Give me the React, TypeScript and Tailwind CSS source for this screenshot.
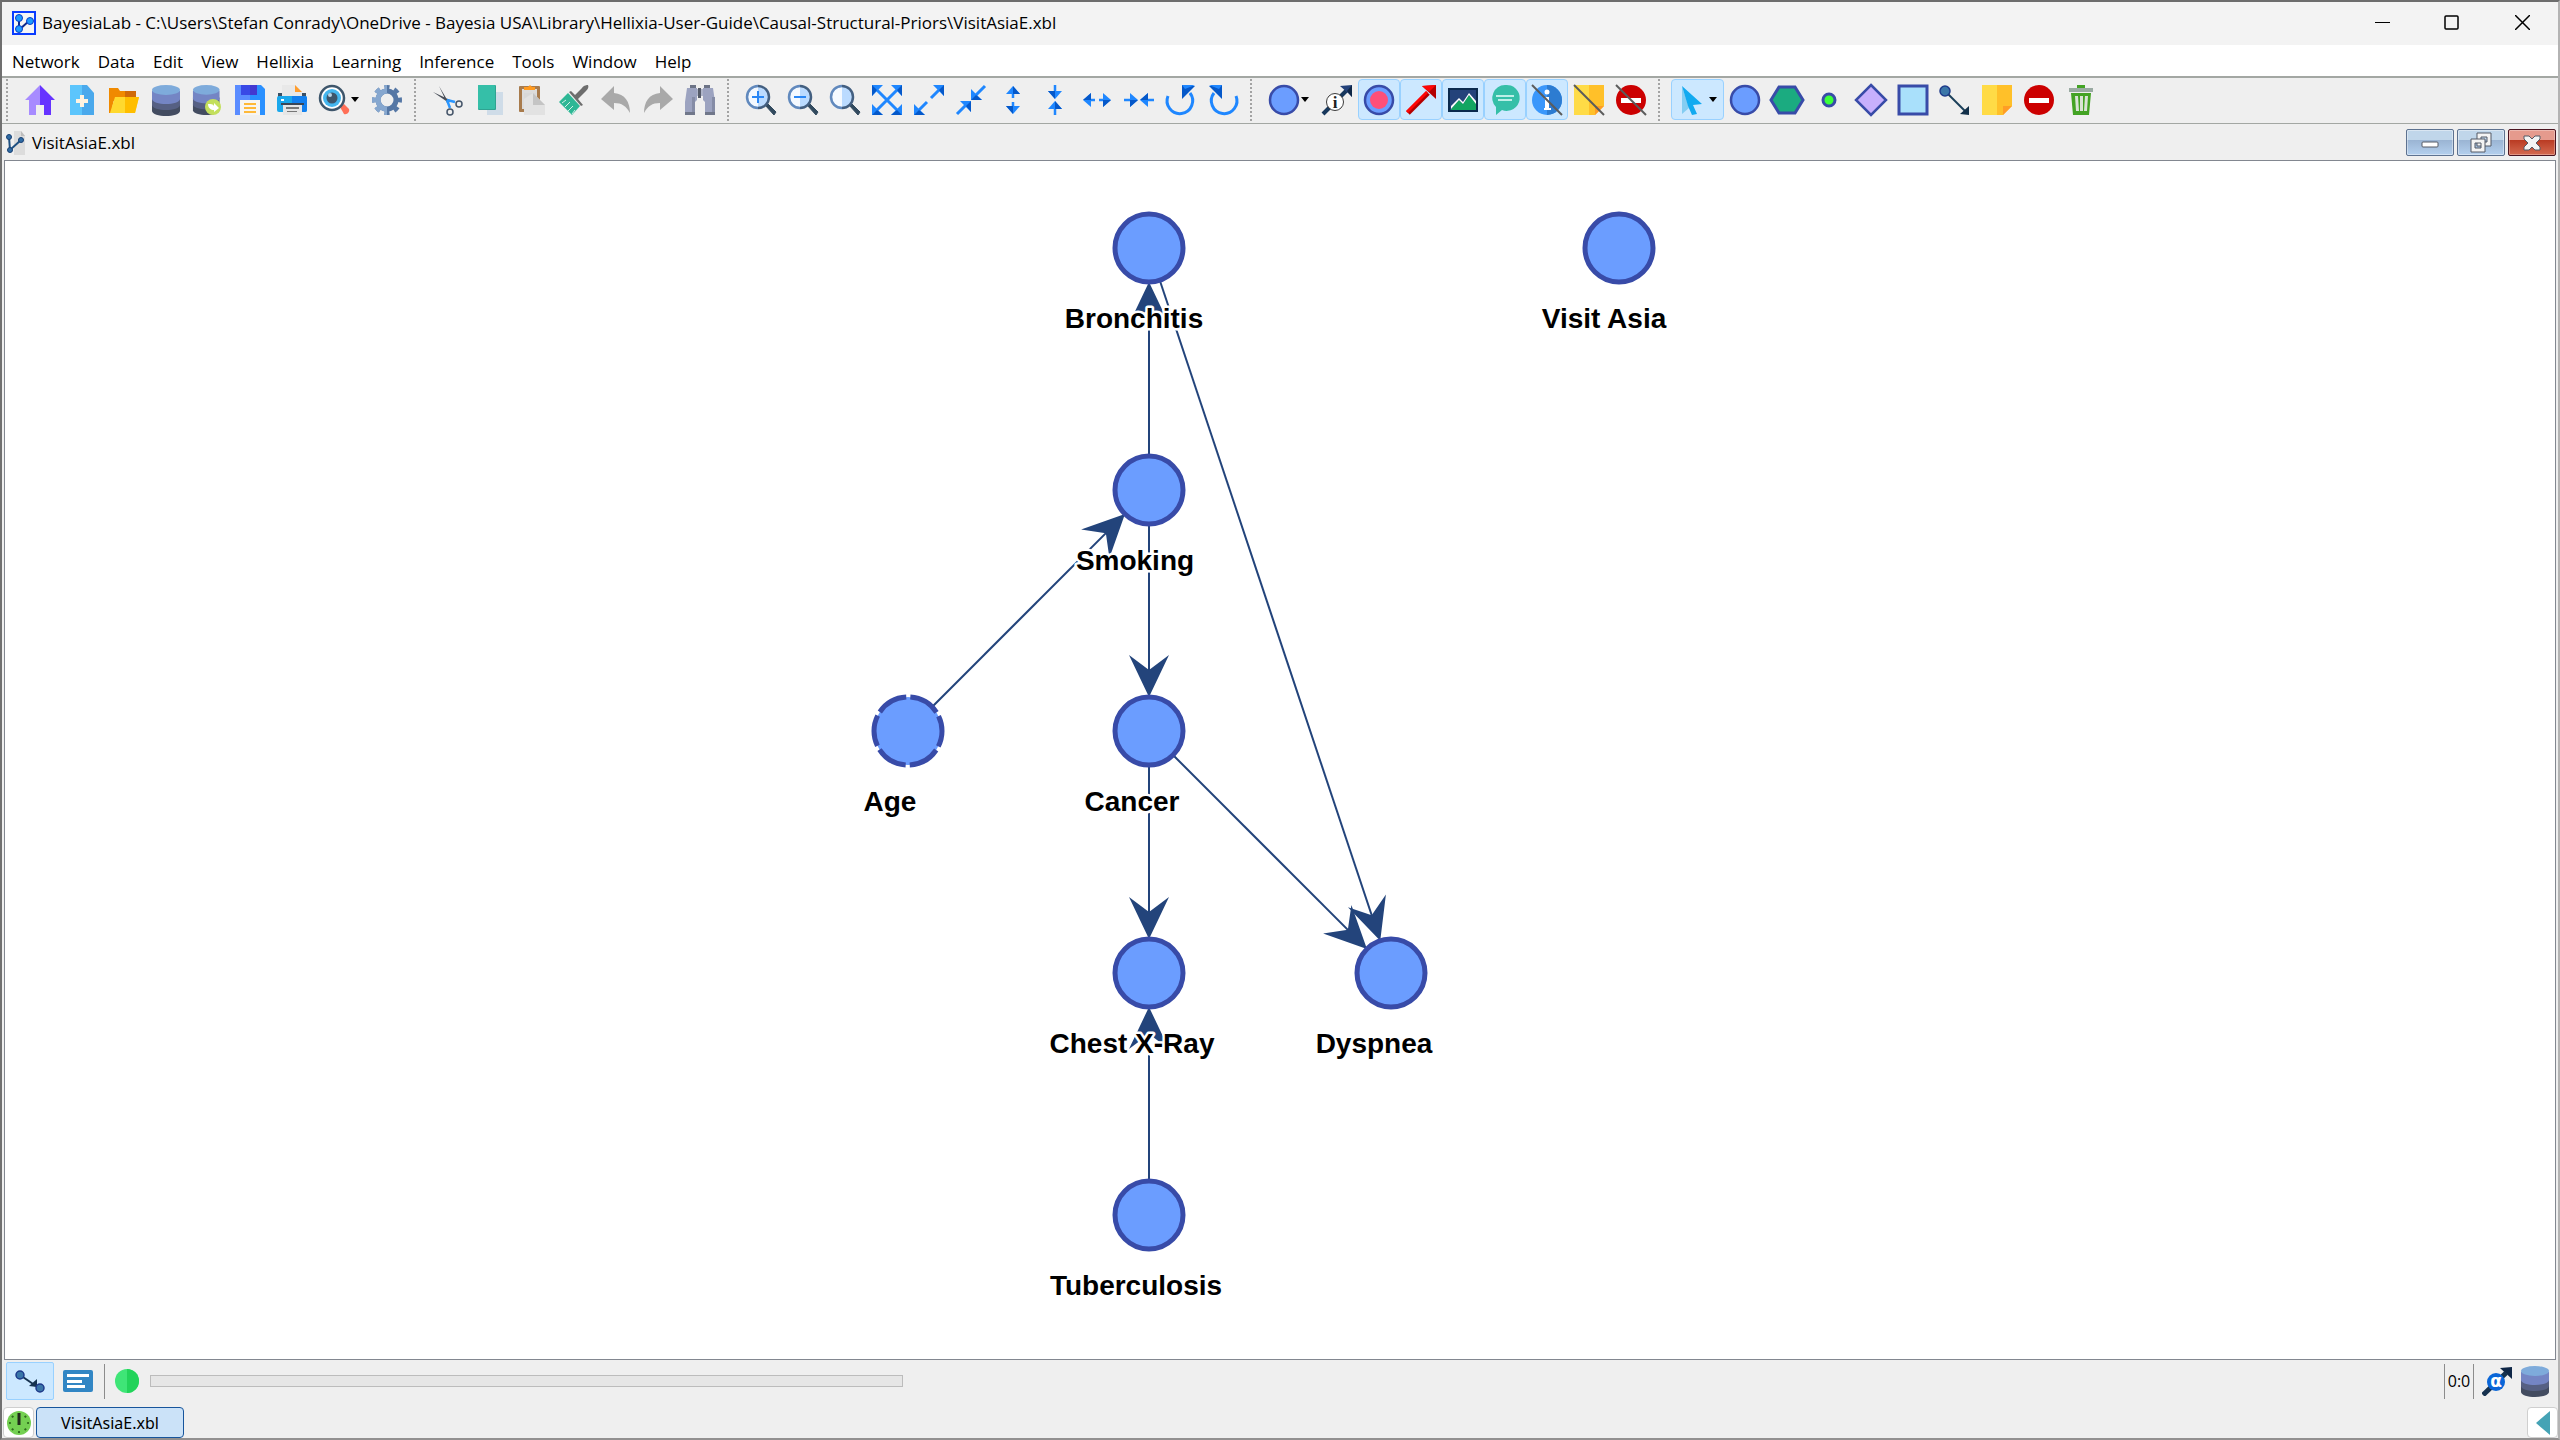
import React from 'react';

interface ToolItem {
    label: string;
    icon: React.ReactNode;
    active?: boolean;
    menu?: boolean;
}

interface GraphNode {
    name: string;
    x: number;
    y: number;
    labelX: number;
    dashed?: boolean;
}

const NODE_RADIUS = 34;
const LABEL_OFFSET = 80;

const Svg: React.FC<{ children: React.ReactNode; size?: number }> = ({ children, size = 30 }) => (
    <svg width={size} height={size} viewBox="0 0 30 30" aria-hidden="true" className="block shrink-0 overflow-visible">
        {children}
    </svg>
);

const HomeIcon = () => (
    <Svg>
        <path d="M15 0 0 15h4v15h7V20h4z" fill="#a78bff" />
        <path d="M15 0l15 15h-4v15h-7V20h-4z" fill="#6633ff" />
    </Svg>
);

const NewIcon = () => (
    <Svg>
        <path d="M3 0h12v30H3z" fill="#5cc5fc" />
        <path d="M15 0h5l7 8v22H15z" fill="#4aa9ec" />
        <path d="M13 10h4v4h4v4h-4v4h-4v-4H9v-4h4z" fill="#fff3e0" />
    </Svg>
);

const FolderIcon = () => (
    <Svg>
        <path d="M0 3h9l2 3h16v10H0z" fill="#f08a00" />
        <path d="M16 6h11v8H16z" fill="#d06a0a" />
        <path d="M0 10h6L2 28H0z" fill="#f08a00" />
        <path d="M6 12h24l-4 16H1z" fill="#ffd92e" />
        <path d="M16 12h14l-4 16H16z" fill="#ffbe00" />
    </Svg>
);

const DatabaseShape = () => (
    <>
        <path d="M1 19v7c0 3 7 5 14 5s14-2 14-5v-7z" fill="#434c60" />
        <path d="M1 13v7c0 3 7 5 14 5s14-2 14-5v-7z" fill="#566083" />
        <path d="M1 6v8c0 3 7 5 14 5s14-2 14-5V6z" fill="#7485c4" />
        <ellipse cx="15" cy="5" rx="14" ry="5" fill="#7eabdb" />
    </>
);

const DatabaseIcon = () => (
    <Svg>
        <DatabaseShape />
    </Svg>
);

const DatabaseSyncIcon = () => (
    <Svg>
        <g transform="translate(-1 0) scale(.95 .97)">
            <DatabaseShape />
        </g>
        <circle cx="20" cy="22" r="8" fill="#c3df5c" />
        <path d="M15 19c3 0 5 0 6 2v-3l5 5-5 4v-2c-3 0-6-2-6-6z" fill="#fff" />
    </Svg>
);

const SaveIcon = () => (
    <Svg>
        <path d="M0 0h15v30H0z" fill="#5a8cff" />
        <path d="M15 0h11l4 4v26H15z" fill="#2a90ff" />
        <path d="M6 0h16v10H6z" fill="#3949e6" />
        <path d="M15 0h7v10h-7z" fill="#4338d0" />
        <path d="M5 15h20v15H5z" fill="#f7f5f2" />
        <path d="M9 18h12v2H9zM9 22h12v2H9zM9 26h12v2H9z" fill="#ffb938" />
    </Svg>
);

const PrintIcon = () => (
    <Svg>
        <path d="M1 8h28v4H1z" fill="#3c5064" />
        <path d="M5 0h13l7 7v5H5z" fill="#e8e8e8" />
        <path d="M18 0l7 7h-7z" fill="#ff9d2e" />
        <rect y="11" width="30" height="16" rx="2" fill="#1aa8ec" />
        <path d="M15 11h13q2 0 2 2v12q0 2-2 2H15z" fill="#1480ee" />
        <path d="M4 18h23v2H4z" fill="#3a4656" />
        <path d="M6 20h19v10H6z" fill="#e6e6e6" />
        <path d="M9 22h13v2H9zM10 26h10v1H10z" fill="#777" />
        <path d="M4 14h3v2H4z" fill="#fff" />
    </Svg>
);

const FindNodeIcon = () => (
    <Svg>
        <path d="M21 22l4-3 5 5c1 3-2 6-5 5z" fill="#ff6f57" />
        <circle cx="13" cy="13" r="12" fill="#fff" stroke="#3e566b" strokeWidth="2.5" />
        <circle cx="13" cy="13" r="9" fill="#45b6ee" />
        <circle cx="13" cy="13" r="5.5" fill="#3e566b" />
        <circle cx="11" cy="10" r="2" fill="#b9d5e8" />
    </Svg>
);

const GearIcon = () => (
    <Svg>
        <g fill="none" stroke="#5577a5">
            <circle cx="15" cy="15" r="9" strokeWidth="5" />
            <circle cx="15" cy="15" r="13" strokeWidth="4" pathLength="16" strokeDasharray="1 1" strokeDashoffset=".5" />
        </g>
        <g fill="none" stroke="#86a7cf">
            <path d="M15 6a9 9 0 0 0 0 18" strokeWidth="5" />
            <path d="M15 2a13 13 0 0 0 0 26" strokeWidth="4" pathLength="8" strokeDasharray="1 1" strokeDashoffset=".5" />
        </g>
    </Svg>
);

const CutIcon = () => (
    <Svg>
        <path d="M6 1l10 17-2 0zM0 7l17 8-1 3z" fill="#474d57" />
        <path d="M14 15l8 2M14 15l3 8" stroke="#2a96ff" strokeWidth="2.5" />
        <circle cx="26" cy="19" r="3" fill="none" stroke="#46566a" strokeWidth="1.5" />
        <circle cx="17" cy="27" r="3" fill="none" stroke="#46566a" strokeWidth="1.5" />
    </Svg>
);

const CopyIcon = () => (
    <Svg>
        <path d="M12 7h16v23H12z" fill="#cfdce8" />
        <rect x="3" width="18" height="25" rx="1" fill="#2fa391" />
        <rect x="3" width="17" height="24" rx="1" fill="#35bfa8" />
    </Svg>
);

const PasteIcon = () => (
    <Svg>
        <rect x="2" y="1" width="21" height="26" rx="1" fill="#a87b4d" />
        <path d="M5 4h15v20H5z" fill="#dcdcdc" />
        <path d="M7 5V2h4l2-2 2 2h3v3z" fill="#ff9a1f" />
        <path d="M7 8h12v22H7z" fill="#d8d8d8" />
        <path d="M16 8l12 12v10H7V14z" fill="#e2e2e2" />
        <path d="M16 8v12h12z" fill="#c4c4c4" />
    </Svg>
);

const BrushIcon = () => (
    <Svg>
        <path d="M16 10l7-7c2-3 5-3 6-3 1 2 0 4-2 6l-8 8 5 6-2 1L10 7l2-1z" fill="#6d6d6d" />
        <path d="M9 8l12 13-8 9L0 17z" fill="#2db795" />
        <path d="M3 18l4-3M6 22l5-5M9 26l5-5M13 29l3-4" stroke="#d2f1e8" strokeWidth="1" />
    </Svg>
);

const UndoIcon = () => (
    <Svg>
        <path d="M13 1v7c11 1 16 9 16 20-4-7-8-10-16-10v7L0 14z" fill="#a9a9a9" />
    </Svg>
);

const RedoIcon = () => (
    <Svg>
        <path d="M17 1v7C6 9 1 17 1 28c4-7 8-10 16-10v7l13-11z" fill="#a9a9a9" />
    </Svg>
);

const BinocularsIcon = () => (
    <Svg>
        <path d="M5 0h6v3H5zM19 0h6v3h-6z" fill="#6c7386" />
        <path d="M2 3h10v12l-2 2v13H0V17zM18 3h10l2 14v13H20V17l-2-2z" fill="#9ca3c0" />
        <path d="M7 12h3v18H7zM27 12h3v18h-3z" fill="#858ca6" />
        <path d="M12 4h6v7h-6z" fill="#aeb4c9" />
        <path d="M13 3h3v10h-3z" fill="#555b69" />
        <path d="M0 27h10v3H0zM20 27h10v3H20z" fill="#70778a" />
    </Svg>
);

const Magnifier: React.FC<{ sign?: string }> = ({ sign }) => (
    <Svg>
        <path d="M19 20l2-2 9 9-2 3z" fill="#324a5e" stroke="#324a5e" />
        <circle cx="12" cy="12" r="10.5" fill="#bbdbff" />
        <path d="M12 2a10 10 0 0 0 0 20z" fill="#f4f9ff" />
        <path d="M12 1a11 11 0 0 0 0 22" fill="none" stroke="#6189bd" strokeWidth="2.5" />
        <path d="M12 1a11 11 0 0 1 0 22" fill="none" stroke="#435f80" strokeWidth="2.5" />
        {sign && <path d={sign} stroke="#2a87f5" strokeWidth="2" />}
    </Svg>
);

const FitIcon = () => (
    <Svg>
        <path d="M5 5l20 20M25 5L5 25" stroke="#1f87ff" strokeWidth="3" />
        <path d="M0 0h11L0 11zM30 0v11L19 0zM0 30V19l11 11zM30 30H19l11-11z" fill="#1f87ff" />
        <path d="M0 0l5 5-5 6zM30 0v11l-5-6zM0 30l5-5 6 5zM30 30l-5-5-6 5z" fill="#0558c9" />
    </Svg>
);

const ExpandIcon = () => (
    <Svg>
        <path d="M25 5l-8 8M13 17l-8 8" stroke="#1f87ff" strokeWidth="3" />
        <path d="M30 0v11L19 0zM0 30V19l11 11z" fill="#1f87ff" />
        <path d="M30 0v11l-5-6zM0 30l5-5 6 5z" fill="#0558c9" />
    </Svg>
);

const ShrinkIcon = () => (
    <Svg>
        <path d="M29 1l-9 9M1 29l9-9" stroke="#1f87ff" strokeWidth="3" />
        <path d="M15 4v11h11zM15 27V16H4z" fill="#1f87ff" />
        <path d="M15 15l5-5 6 5zM15 16l-5 5 5 6z" fill="#0558c9" />
    </Svg>
);

// Head pointing up with its tip at the origin
const ArrowTip: React.FC<{ at: string }> = ({ at }) => (
    <g transform={at}>
        <path d="M0 0l7 8H-7z" fill="#1f87ff" />
        <path d="M0 0l7 8H0z" fill="#0558c9" />
    </g>
);

const StretchIcon: React.FC<{ angle: number }> = ({ angle }) => (
    <Svg>
        <g transform={`rotate(${angle} 15 15)`}>
            <path d="M15 6v7M15 17v7" stroke="#1f87ff" strokeWidth="2.5" />
            <ArrowTip at="translate(15 1)" />
            <ArrowTip at="translate(15 29) rotate(180)" />
        </g>
    </Svg>
);

const SqueezeIcon: React.FC<{ angle: number }> = ({ angle }) => (
    <Svg>
        <g transform={`rotate(${angle} 15 15)`}>
            <path d="M15 0v7M15 23v7" stroke="#1f87ff" strokeWidth="2.5" />
            <ArrowTip at="translate(15 14) rotate(180)" />
            <ArrowTip at="translate(15 16)" />
        </g>
    </Svg>
);

const RotateLeftIcon = () => (
    <Svg>
        <path d="M2 11a12.8 12.8 0 1 0 22-3" fill="none" stroke="#1f87ff" strokeWidth="3" />
        <path d="M16 0v14L29 1z" fill="#0558c9" />
        <path d="M16 0h13l-10 4z" fill="#1f87ff" />
    </Svg>
);

const RotateRightIcon = () => (
    <Svg>
        <path d="M28 11A12.8 12.8 0 1 1 6 8" fill="none" stroke="#1f87ff" strokeWidth="3" />
        <path d="M14 0v14L1 1z" fill="#0558c9" />
        <path d="M14 0H1l10 4z" fill="#1f87ff" />
    </Svg>
);

const NodeIcon = () => (
    <Svg>
        <circle cx="15" cy="15" r="14" fill="#6b9dff" stroke="#384ba8" strokeWidth="2.5" />
    </Svg>
);

const ArcInfoIcon = () => (
    <Svg>
        <path d="M1 29L25 5" stroke="#17375c" strokeWidth="4" />
        <path d="M30 0v12l-4-4-8-7z" fill="#24427a" />
        <path d="M30 0v12l-5-6z" fill="#0f2747" />
        <circle cx="13" cy="17" r="8.5" fill="#fff" stroke="#3c3c3c" />
        <text x="13" y="23" textAnchor="middle" className="fill-[#222] font-['Liberation_Serif',serif] text-[17px] font-bold">i</text>
    </Svg>
);

const TargetIcon = () => (
    <Svg>
        <circle cx="15" cy="15" r="14" fill="#6b9dff" stroke="#384ba8" strokeWidth="2.5" />
        <circle cx="15" cy="15" r="9" fill="#ff4f78" />
    </Svg>
);

const RedArrowIcon = () => (
    <Svg>
        <path d="M2 28L22 8" stroke="#b30000" strokeWidth="5" />
        <path d="M1 27L21 7" stroke="#ff0505" strokeWidth="3" />
        <path d="M30 0v14L16 1z" fill="#b30000" />
        <path d="M30 0L16 1l7 6z" fill="#ff0505" />
    </Svg>
);

const ImageIcon = () => (
    <Svg>
        <rect x="1" y="4" width="28" height="22" fill="#24427a" stroke="#0b2a4d" strokeWidth="2" />
        <path d="M3 24l8-9 4 4 6-9 7 8v7H3z" fill="#12a561" />
        <path d="M3 24l8-9 4 4 6-9 7 9v-3l-7-8-6 9-4-4-8 8z" fill="#fff" />
    </Svg>
);

const CommentIcon = () => (
    <Svg>
        <path d="M15 0a13 13 0 1 1-3 25l-6 5V22A13 13 0 0 1 15 0z" fill="#35bfa8" />
        <path d="M6 11h18M8 15h14" stroke="#eafffb" strokeWidth="1.5" />
    </Svg>
);

const Strike = () => <path d="M0 0l30 30" stroke="#5b5b5b" strokeWidth="2" />;

const InfoOffIcon = () => (
    <Svg>
        <circle cx="15" cy="15" r="15" fill="#3a97fb" />
        <path d="M15 0a15 15 0 0 1 0 30z" fill="#2d7cd1" />
        <circle cx="15" cy="7" r="2.5" fill="#fff" />
        <path d="M12 12h5v11h2v2h-7v-2h1v-9h-1z" fill="#fff" />
        <Strike />
    </Svg>
);

const NoteShape = () => (
    <>
        <path d="M0 0h15v30H0z" fill="#ffdb46" />
        <path d="M15 0h15v21l-9 9h-6z" fill="#ffc029" />
        <path d="M21 30v-9h9z" fill="#ff9d26" />
    </>
);

const ForbiddenShape = () => (
    <>
        <circle cx="15" cy="15" r="15" fill="#cc0000" />
        <path d="M5 13h20v5H5z" fill="#fff" />
    </>
);

const PointerIcon = () => (
    <Svg>
        <path d="M5 1v28l7-6z" fill="#84cdf2" />
        <path d="M5 1l20 18-9 1 4 9-5 1-4-9z" fill="#12aaf0" />
    </Svg>
);

const HexagonIcon = () => (
    <Svg>
        <path d="M7 2h16l8 13-8 13H7L-1 15z" fill="#1bab80" stroke="#384ba8" strokeWidth="3" />
    </Svg>
);

const SmallNodeIcon = () => (
    <Svg>
        <circle cx="15" cy="15" r="6" fill="#3cff3c" stroke="#384ba8" strokeWidth="3" />
    </Svg>
);

const DiamondIcon = () => (
    <Svg>
        <path d="M15 0l15 15-15 15L0 15z" fill="#c7b0fd" stroke="#384ba8" strokeWidth="2.5" />
    </Svg>
);

const SquareIcon = () => (
    <Svg>
        <path d="M1 1h28v28H1z" fill="#a9e0fb" stroke="#384ba8" strokeWidth="3" />
    </Svg>
);

const ArcIcon = () => (
    <Svg>
        <path d="M5 6l21 21" stroke="#1b3f5a" strokeWidth="2" />
        <path d="M29 30V21l-9 8z" fill="#12304a" />
        <circle cx="5" cy="6" r="5" fill="#3a76a8" stroke="#1e3a8a" strokeWidth="1.5" />
    </Svg>
);

const TrashIcon = () => (
    <Svg>
        <path d="M11 0h8v3h-8z" fill="#43a324" />
        <path d="M3 3h24v4H3z" fill="#9aaaa2" />
        <path d="M5 8h20l-2 22H7z" fill="#43a324" />
        <path d="M9 11h3l1 15h-3zM14 11h3v15h-3zM19 11h3l-1 15h-3z" fill="#d9e3d6" />
    </Svg>
);

const toolGroups: ToolItem[][] = [
    [
        { label: 'Home', icon: <HomeIcon /> },
        { label: 'New', icon: <NewIcon /> },
        { label: 'Open', icon: <FolderIcon /> },
        { label: 'Open data', icon: <DatabaseIcon /> },
        { label: 'Associate data', icon: <DatabaseSyncIcon /> },
        { label: 'Save', icon: <SaveIcon /> },
        { label: 'Print', icon: <PrintIcon /> },
        { label: 'Search', icon: <FindNodeIcon />, menu: true },
        { label: 'Settings', icon: <GearIcon /> },
    ],
    [
        { label: 'Cut', icon: <CutIcon /> },
        { label: 'Copy', icon: <CopyIcon /> },
        { label: 'Paste', icon: <PasteIcon /> },
        { label: 'Paste format', icon: <BrushIcon /> },
        { label: 'Undo', icon: <UndoIcon /> },
        { label: 'Redo', icon: <RedoIcon /> },
        { label: 'Find', icon: <BinocularsIcon /> },
    ],
    [
        { label: 'Zoom in', icon: <Magnifier sign="M12 6v12M6 12h12" /> },
        { label: 'Zoom out', icon: <Magnifier sign="M6 12h12" /> },
        { label: 'Default zoom', icon: <Magnifier /> },
        { label: 'Best fit', icon: <FitIcon /> },
        { label: 'Expand', icon: <ExpandIcon /> },
        { label: 'Shrink', icon: <ShrinkIcon /> },
        { label: 'Stretch vertically', icon: <StretchIcon angle={0} /> },
        { label: 'Squeeze vertically', icon: <SqueezeIcon angle={0} /> },
        { label: 'Stretch horizontally', icon: <StretchIcon angle={90} /> },
        { label: 'Squeeze horizontally', icon: <SqueezeIcon angle={90} /> },
        { label: 'Rotate left', icon: <RotateLeftIcon /> },
        { label: 'Rotate right', icon: <RotateRightIcon /> },
    ],
    [
        { label: 'Node style', icon: <NodeIcon />, menu: true },
        { label: 'Arc information', icon: <ArcInfoIcon /> },
        { label: 'Target node', icon: <TargetIcon />, active: true },
        { label: 'Arc colors', icon: <RedArrowIcon />, active: true },
        { label: 'Images', icon: <ImageIcon />, active: true },
        { label: 'Comments', icon: <CommentIcon />, active: true },
        { label: 'Hide information', icon: <InfoOffIcon />, active: true },
        { label: 'Hide notes', icon: <Svg><NoteShape /><Strike /></Svg> },
        { label: 'Hide forbidden arcs', icon: <Svg><ForbiddenShape /><Strike /></Svg> },
    ],
    [
        { label: 'Select', icon: <PointerIcon />, active: true, menu: true },
        { label: 'Create node', icon: <NodeIcon /> },
        { label: 'Create decision', icon: <HexagonIcon /> },
        { label: 'Create constraint', icon: <SmallNodeIcon /> },
        { label: 'Create utility', icon: <DiamondIcon /> },
        { label: 'Create function', icon: <SquareIcon /> },
        { label: 'Create arc', icon: <ArcIcon /> },
        { label: 'Create note', icon: <Svg><NoteShape /></Svg> },
        { label: 'Forbid arc', icon: <Svg><ForbiddenShape /></Svg> },
        { label: 'Delete', icon: <TrashIcon /> },
    ],
];

const menus = ['Network', 'Data', 'Edit', 'View', 'Hellixia', 'Learning', 'Inference', 'Tools', 'Window', 'Help'];

// Coordinates are relative to the top left corner of the canvas
const nodes: GraphNode[] = [
    { name: 'Bronchitis', x: 1144, y: 87, labelX: 1129 },
    { name: 'Visit Asia', x: 1614, y: 87, labelX: 1599 },
    { name: 'Smoking', x: 1144, y: 329, labelX: 1130 },
    { name: 'Age', x: 903, y: 570, labelX: 885, dashed: true },
    { name: 'Cancer', x: 1144, y: 570, labelX: 1127 },
    { name: 'Chest X-Ray', x: 1144, y: 812, labelX: 1127 },
    { name: 'Dyspnea', x: 1386, y: 812, labelX: 1369 },
    { name: 'Tuberculosis', x: 1144, y: 1054, labelX: 1131 },
];

const arcs = [
    ['Smoking', 'Bronchitis'],
    ['Bronchitis', 'Dyspnea'],
    ['Age', 'Smoking'],
    ['Smoking', 'Cancer'],
    ['Cancer', 'Chest X-Ray'],
    ['Cancer', 'Dyspnea'],
    ['Tuberculosis', 'Chest X-Ray'],
];

const findNode = (name: string) => nodes.find(n => n.name === name)!;

const Arc: React.FC<{ from: GraphNode; to: GraphNode }> = ({ from, to }) => {
    const length = Math.hypot(to.x - from.x, to.y - from.y);
    const angle = Math.atan2(to.y - from.y, to.x - from.x) * 180 / Math.PI;
    const tip = length - NODE_RADIUS;

    return (
        <g transform={`translate(${from.x} ${from.y}) rotate(${angle})`} className="fill-[#23447b] stroke-[#23447b]">
            <line x1={NODE_RADIUS} y1="0" x2={tip - 10} y2="0" strokeWidth="2" />
            <path d="M0 0l-42-20 15 20-15 20z" transform={`translate(${tip} 0)`} stroke="none" />
        </g>
    );
};

const NetworkCanvas = () => (
    <svg className="block size-full" role="img" aria-label="Bayesian network">
        {arcs.map(([from, to]) => (
            <Arc key={from + to} from={findNode(from)} to={findNode(to)} />
        ))}
        {nodes.map(node => (
            <circle
                key={node.name}
                cx={node.x}
                cy={node.y}
                r={NODE_RADIUS}
                strokeWidth="5"
                pathLength={360}
                strokeDasharray={node.dashed ? '53 7' : undefined}
                strokeDashoffset={node.dashed ? 26 : undefined}
                className="fill-[#6b9dff] stroke-[#384ba8]"
            />
        ))}
        {nodes.map(node => (
            <text
                key={node.name}
                x={node.labelX}
                y={node.y + LABEL_OFFSET}
                textAnchor="middle"
                className="fill-black stroke-white stroke-[5px] font-['Liberation_Sans',Arial,sans-serif] text-[28px] font-bold [paint-order:stroke] [stroke-linejoin:round]"
            >
                {node.name}
            </text>
        ))}
    </svg>
);

const ToolHandle = () => (
    <div className="w-[19px] self-stretch pt-px pl-1.5">
        <div className="h-full w-0.5 bg-[repeating-linear-gradient(to_bottom,#a3a3a3_0_2px,transparent_2px_4px)]" />
    </div>
);

const ToolButton: React.FC<{ item: ToolItem }> = ({ item }) => (
    <button
        aria-label={item.label}
        className={`flex h-[41px] items-center rounded-sm border pl-[5px] ${item.menu ? 'w-[53px] gap-0.5' : 'w-[42px]'} ${item.active ? 'border-[#99d1ff] bg-[#cce8ff]' : 'border-transparent'}`}
    >
        {item.icon}
        {item.menu && (
            <svg width="8" height="5" viewBox="0 0 8 5" aria-hidden="true" className="shrink-0">
                <path d="M0 0h8L4 5z" />
            </svg>
        )}
    </button>
);

const TitleBar = () => (
    <header className="flex h-[43px] shrink-0 items-center bg-[#f3f3f3] pb-0.5 pl-2.5">
        <svg width="24" height="24" viewBox="0 0 24 24" aria-hidden="true">
            <path d="M1 1h22v22H1z" fill="#f6f6f6" stroke="#0a3cff" strokeWidth="2" />
            <path d="M7 7v12L18 9" fill="none" stroke="#0d2a8c" strokeWidth="2" />
            <g fill="#1d9bff" stroke="#0a3cc8">
                <circle cx="7" cy="7" r="3.5" />
                <circle cx="7" cy="18" r="3.5" />
                <circle cx="18" cy="10" r="3.5" />
            </g>
        </svg>
        <h1 className="ml-1.5 flex-1 truncate">
            BayesiaLab - C:\Users\Stefan Conrady\OneDrive - Bayesia USA\Library\Hellixia-User-Guide\Causal-Structural-Priors\VisitAsiaE.xbl
        </h1>
        <button aria-label="Minimize" className="flex h-full w-[69px] items-center justify-center">
            <svg width="15" height="15"><path d="M0 7.5h15" stroke="#000" /></svg>
        </button>
        <button aria-label="Maximize" className="flex h-full w-[69px] items-center justify-center">
            <svg width="15" height="15"><rect x="1" y="1" width="13" height="13" rx="1" fill="none" stroke="#000" strokeWidth="1.5" /></svg>
        </button>
        <button aria-label="Close" className="flex h-full w-[72px] items-center justify-center">
            <svg width="15" height="15"><path d="M0 0l15 15M15 0L0 15" stroke="#000" strokeWidth="1.5" /></svg>
        </button>
    </header>
);

const DocumentTitle = () => (
    <div className="flex h-9 shrink-0 items-center pt-px pr-0.5 pl-1">
        <svg width="20" height="24" viewBox="0 0 20 24" aria-hidden="true">
            <path d="M8 0h7l4 5v19H8z" fill="#dcdcdc" />
            <path d="M15 0l4 5h-4z" fill="#bdbdbd" />
            <path d="M3 6l1 13L15 9" fill="none" stroke="#1e4f80" strokeWidth="2" />
            <g fill="#2f6ca5" stroke="#173f73">
                <circle cx="3" cy="6" r="2.5" />
                <circle cx="4" cy="19" r="2.5" />
                <circle cx="15" cy="9" r="2.5" />
            </g>
        </svg>
        <h2 className="ml-1.5 flex-1">VisitAsiaE.xbl</h2>
        <div className="flex gap-[3px]">
            <button aria-label="Minimize document" className="flex h-[27px] w-12 items-center justify-center rounded-xs border border-[#5d7290] bg-linear-to-b from-[#c0d6ea] from-40% via-[#9ab4d3] via-40% to-[#b4d0ee] inset-ring inset-ring-white/40">
                <svg width="18" height="18"><rect x="1" y="8" width="16" height="5" rx="1" fill="#fff" stroke="#555b66" /></svg>
            </button>
            <button aria-label="Restore document" className="flex h-[27px] w-12 items-center justify-center rounded-xs border border-[#5d7290] bg-linear-to-b from-[#c0d6ea] from-40% via-[#9ab4d3] via-40% to-[#b4d0ee] inset-ring inset-ring-white/40">
                <svg width="22" height="22" viewBox="0 0 22 22" fill="#f4f4f4" stroke="#555b66" fillRule="evenodd">
                    <path d="M7 1h14v13H7zM11 5h6v5h-6z" />
                    <path d="M1 7h14v13H1zM5 11h6v5H5z" />
                </svg>
            </button>
            <button aria-label="Close document" className="flex h-[27px] w-12 items-center justify-center rounded-xs border border-[#4b1420] bg-linear-to-b from-[#e59a8d] from-40% via-[#b93a22] via-40% to-[#d46a50] inset-ring inset-ring-white/30">
                <svg width="18" height="16" viewBox="0 0 18 16">
                    <path d="M1 1h5l3 3 3-3h5v3l-4 4 4 4v3h-5l-3-3-3 3H1v-3l4-4-4-4z" fill="#f4f4f4" stroke="#555b66" strokeLinejoin="round" />
                </svg>
            </button>
        </div>
    </div>
);

const StatusBar = () => (
    <div className="flex h-[42px] shrink-0 items-center pl-1">
        <button aria-label="Graph view" className="flex h-[38px] w-12 items-center justify-center rounded-xs border border-[#99d1ff] bg-[#cce8ff]">
            <svg width="30" height="24" viewBox="0 0 30 24">
                <path d="M5 6l16 11" stroke="#16324f" strokeWidth="2" />
                <path d="M22 10v8l-8-1z" fill="#16324f" />
                <circle cx="5" cy="6" r="4" fill="#3a76a8" stroke="#1e3a8a" strokeWidth="1.5" />
                <circle cx="25" cy="19" r="4" fill="#3a76a8" stroke="#1e3a8a" strokeWidth="1.5" />
            </svg>
        </button>
        <button aria-label="Report view" className="ml-[9px]">
            <svg width="30" height="22" viewBox="0 0 30 22" className="block">
                <rect width="30" height="22" rx="2" fill="#3286c4" />
                <path d="M4 4h22v3H4zM4 10h15v3H4zM4 15h18v3H4z" fill="#fff" />
            </svg>
        </button>
        <div className="ml-[11px] h-[35px] w-px bg-[#8c8c8c]" />
        <svg width="24" height="24" viewBox="0 0 24 24" aria-hidden="true" className="ml-2.5">
            <circle cx="12" cy="12" r="12" fill="#3fe577" />
            <path d="M12 0a12 12 0 0 1 0 24z" fill="#22d35a" />
        </svg>
        <div role="progressbar" aria-label="Progress" aria-valuenow={0} className="ml-[11px] h-3 w-[753px] border border-[#bcbcbc] bg-[#e6e6e6]" />
        <div className="ml-auto flex h-[35px] w-[30px] items-center justify-center border-x border-[#8c8c8c] text-base">0:0</div>
        <button aria-label="Arc analysis" className="ml-2">
            <svg width="30" height="30" viewBox="0 0 30 30" className="block">
                <path d="M1 29L24 7" stroke="#16324f" strokeWidth="5" />
                <path d="M30 1v12L18 2z" fill="#0f2747" />
                <circle cx="14" cy="16" r="9" fill="#0a66d8" />
                <text x="14" y="21" textAnchor="middle" className="fill-white font-['DejaVu_Sans',sans-serif] text-[17px] font-bold">α</text>
            </svg>
        </button>
        <button aria-label="Data" className="mr-2 ml-2">
            <DatabaseIcon />
        </button>
    </div>
);

const DocumentTabs = () => (
    <div className="flex h-9 shrink-0 items-end gap-0.5 pl-px">
        <button aria-label="Console" className="flex size-[31px] items-center justify-center rounded border border-[#cfcfcf] bg-white">
            <svg width="24" height="24" viewBox="0 0 24 24">
                <circle cx="12" cy="12" r="12" fill="#74d052" />
                <circle cx="12" cy="12" r="9" fill="none" stroke="#2f6b1d" strokeWidth="2" pathLength="56" strokeDasharray="2 5" strokeDashoffset="1" />
                <path d="M12 2v12" stroke="#222b1c" strokeWidth="3" />
            </svg>
        </button>
        <button className="h-[31px] w-[148px] rounded border border-[#17559c] bg-[#cbe2f8] font-['Noto_Sans',sans-serif] text-base leading-none">VisitAsiaE.xbl</button>
        <button aria-label="Show panel" className="ml-auto flex size-[31px] items-center justify-center rounded border border-[#cfcfcf] bg-white">
            <svg width="14" height="24"><path d="M14 0v24L0 12z" fill="#45a3b5" /></svg>
        </button>
    </div>
);

const App: React.FC = () => {
    return (
        <div className="flex h-screen flex-col border-2 border-t-[#6d6d6d] border-r-[#b3b3b3] border-b-[#929090] border-l-[#707070] bg-[#efefef] font-['Open_Sans','Noto_Sans',sans-serif] text-[17px] leading-6 text-black">
            <TitleBar />
            <nav className="flex h-[31px] shrink-0 items-center bg-white pt-0.5 pl-px">
                {menus.map(menu => (
                    <button key={menu} className="px-[9px]">{menu}</button>
                ))}
            </nav>
            <div className="flex h-12 shrink-0 items-center border-t-2 border-b border-[#a3a7a3] pb-0.5">
                {toolGroups.map((group, index) => (
                    <div key={index} className={`flex h-full items-center ${index === 0 ? '-ml-0.5' : ''}`}>
                        <ToolHandle />
                        {group.map(item => <ToolButton key={item.label} item={item} />)}
                    </div>
                ))}
            </div>
            <DocumentTitle />
            <main className="mx-0.5 min-h-0 flex-1 border border-[#828790] bg-white">
                <NetworkCanvas />
            </main>
            <StatusBar />
            <DocumentTabs />
        </div>
    );
};

export default App;
